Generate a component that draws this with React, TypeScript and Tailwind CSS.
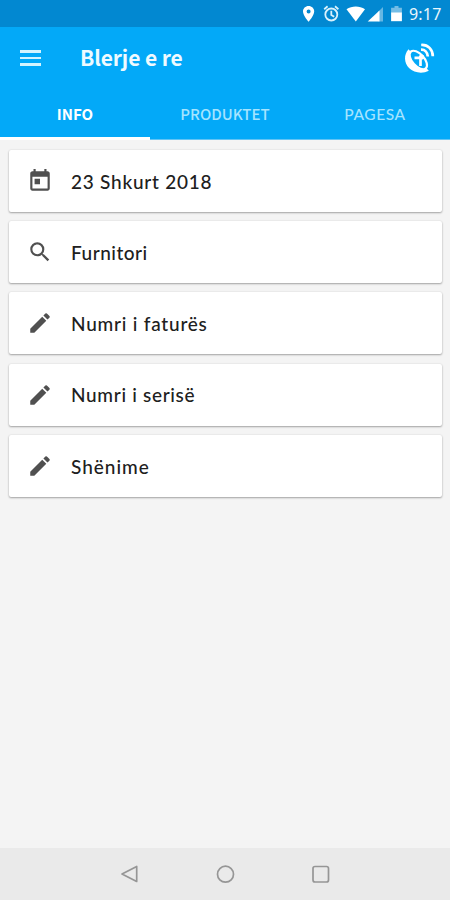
import React from "react";

const CALENDAR =
  "M19 3h-1V1h-2v2H8V1H6v2H5c-1.1 0-2 .9-2 2v14c0 1.1.9 2 2 2h14c1.1 0 2-.9 2-2V5c0-1.1-.9-2-2-2zm0 16H5V8h14v11zM7 10h5v5H7z";
const SEARCH =
  "M15.5 14h-.79l-.28-.27A6.471 6.471 0 0 0 16 9.5 6.5 6.5 0 1 0 9.5 16c1.61 0 3.09-.59 4.23-1.57l.27.28v.79l5 4.99L20.49 19l-4.99-5zm-6 0C7.01 14 5 11.99 5 9.5S7.01 5 9.5 5 14 7.01 14 9.5 11.99 14 9.5 14z";
const PENCIL =
  "M3 17.25V21h3.75L17.81 9.94l-3.75-3.75L3 17.25zM20.71 7.04a1 1 0 0 0 0-1.41l-2.34-2.34a1 1 0 0 0-1.41 0l-1.83 1.83 3.75 3.75 1.83-1.83z";

const rows = [
  { icon: CALENDAR, label: "23 Shkurt 2018", spacing: "pb-[1px] tracking-[0.75px]" },
  { icon: SEARCH, label: "Furnitori", spacing: "pb-[1px] tracking-[0.5px]" },
  { icon: PENCIL, label: "Numri i faturës", spacing: "pb-[1px] tracking-[0.78px]" },
  { icon: PENCIL, label: "Numri i serisë", spacing: "pb-[1px] tracking-[0.68px]" },
  { icon: PENCIL, label: "Shënime", spacing: "tracking-[1px]" },
];

function StatusBar() {
  return (
    <div className="flex h-[27px] items-center bg-[#0288d1] pl-[302px] text-white">
      <svg className="h-[27px] w-[106px] shrink-0" viewBox="302 0 106 27" fill="currentColor">
        <path
          fillRule="evenodd"
          d="M308.6 6c-3.2 0-5.6 2.4-5.6 5.5 0 4 5.6 10.3 5.6 10.3s5.6-6.3 5.6-10.3c0-3.1-2.4-5.5-5.6-5.5zm0 3.5a2 2 0 1 1 0 4 2 2 0 0 1 0-4z"
        />
        <g fill="none" stroke="#d9f1fc" strokeWidth="1.8">
          <circle cx="331.3" cy="14.5" r="6" />
          <path d="M331.3 10.7v4.2l2.9 1.8M324.2 9.2l3.4-2.9M338.4 9.2L335 6.3" />
        </g>
        <path d="M346.5 9.3C352 5.5 359.500 5.500 365 9.300L355.800 21.400z" />
        <path d="M383 7v14.500h-4.500V11.500z" fillOpacity=".4" />
        <path d="M379.500 10.500v11h-11.800z" />
        <path d="M394.500 6h4v1.700h3.400V13h-10.800V7.700h3.400z" fillOpacity=".45" />
        <path d="M391.100 12.500h10.800v8.700h-10.800z" />
      </svg>
      <span className="ml-[1px] pt-px font-['Noto_Sans',sans-serif] text-[16px] leading-none tracking-[0.2px] text-[#e9f7fd]">
        9:17
      </span>
    </div>
  );
}

function Dish() {
  return (
    <svg className="h-8 w-8" viewBox="403 41 32 32" fill="none" stroke="white">
      <path
        d="M408.500 48.300C403.500 54 404 62 409 67C414 72 422.500 73 428.800 69.800L426.500 67.300Z"
        fill="white"
        stroke="none"
      />
      <ellipse cx="418.300" cy="59" rx="11.200" ry="5.900" transform="rotate(48 418.300 59)" fill="#03a9f8" strokeWidth="2.200" />
      <path d="M414.500 56.800H421M420.500 56V65" strokeWidth="2.700" />
      <circle cx="421.500" cy="56" r="2.600" fill="white" stroke="none" />
      <path d="M421 48.700C424.800 48.500 427.500 51.200 427.800 55.500M421.200 44C428 43.500 432.800 48.500 432.800 55.300" strokeWidth="2.700" />
    </svg>
  );
}

export default function App() {
  return (
    <main className="flex h-[900px] w-[450px] flex-col overflow-hidden bg-[#f4f4f4]">
      <StatusBar />
      <header className="h-[113px] shrink-0 bg-[#03a9f8] text-white">
        <div className="flex h-[62px] items-center pr-[15px] pl-[20px]">
          <div className="flex w-[60px] flex-col gap-1">
            <span className="h-[2.400px] w-[21px] bg-[#d4f4ff]" />
            <span className="h-[2.400px] w-[21px] bg-[#d4f4ff]" />
            <span className="h-[2.400px] w-[21px] bg-[#d4f4ff]" />
          </div>
          <h1 className="flex-1 pb-[2px] font-['Noto_Sans_CJK_SC',sans-serif] text-[21px] leading-none font-bold tracking-[-0.1px] whitespace-nowrap text-[#effaff]">
            Blerje e re
          </h1>
          <Dish />
        </div>
        <nav className="grid h-[51px] grid-cols-3 text-center font-['Noto_Sans_CJK_SC',sans-serif] text-[15px] leading-[50px]">
          <span className="h-[51px] border-b-[3px] border-white font-bold">INFO</span>
          <span className="h-[51px] border-b border-[#62c4f5] font-medium text-[#a5e4ff]">PRODUKTET</span>
          <span className="h-[51px] border-b border-[#62c4f5] font-['Lato',sans-serif] text-[15.500px] font-medium tracking-[0.6px] text-[#a5e4ff]">
            PAGESA
          </span>
        </nav>
      </header>
      <section className="flex flex-1 flex-col gap-[9.200px] pt-[10px] pr-[8px] pl-[9px]">
        {rows.map((row) => (
          <div
            key={row.label}
            className="flex h-[62px] items-center rounded-[2px] bg-white pl-[18px] shadow-[0_1px_2px_rgba(0,0,0,0.32),0_0_2px_rgba(0,0,0,0.1)]"
          >
            <svg className="h-[26px] w-[26px] shrink-0" viewBox="0 0 24 24" fill="#505050">
              <path d={row.icon} />
            </svg>
            <span className={`ml-[18px] pt-[1px] font-['Lato',sans-serif] text-[19px] leading-none font-medium text-[#202020] ${row.spacing}`}>
              {row.label}
            </span>
          </div>
        ))}
      </section>
      <footer className="flex h-[52px] shrink-0 items-center justify-center bg-[#eaeaea]">
        <svg className="h-6 w-[220px]" viewBox="115 862 220 24" fill="none" stroke="#969696" strokeWidth="1.700" strokeLinejoin="round">
          <path d="M136.700 866.500v15l-14.700-7.500z" />
          <circle cx="225.500" cy="874.200" r="8" />
          <rect x="313" y="866.500" width="15.500" height="15.500" rx="2" />
        </svg>
      </footer>
    </main>
  );
}
